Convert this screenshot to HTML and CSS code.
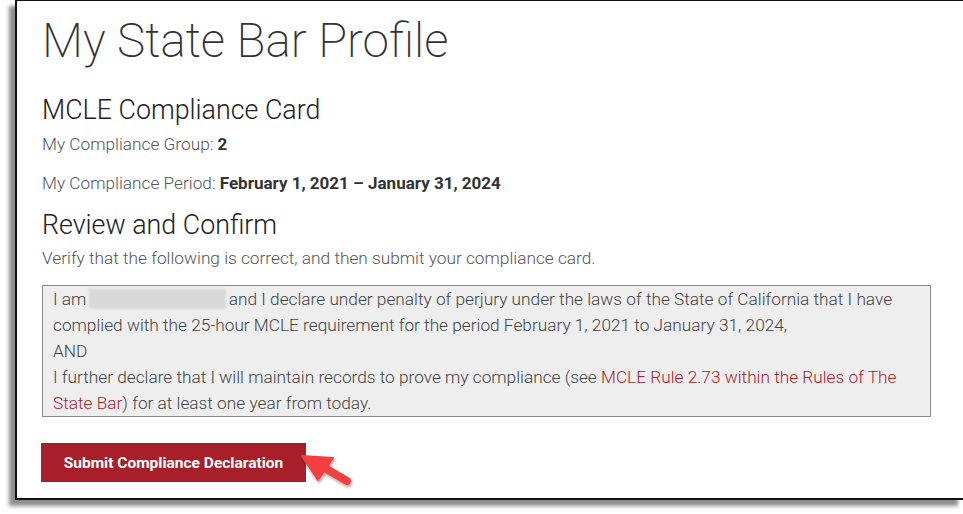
FILE: index.html
```html
<!DOCTYPE html>
<html lang="en">
<head>
<meta charset="utf-8">
<title>My State Bar Profile</title>
<link rel="stylesheet" href="styles.css">
</head>
<body>
<div class="frame">
  <main class="content">
    <h1 class="title">My State Bar Profile</h1>
    <h2 class="section-title first">MCLE Compliance Card</h2>
    <p class="info">My Compliance Group: <strong>2</strong></p>
    <p class="info period">My Compliance Period: <strong>February 1, 2021 – January 31, 2024</strong></p>
    <h2 class="section-title second">Review and Confirm</h2>
    <p class="info intro">Verify that the following is correct, and then submit your compliance card.</p>
    <div class="declaration">
      I am <span class="redacted"></span> and I declare under penalty of perjury under the laws of the State of California that I have complied with the 25-hour MCLE requirement for the period February 1, 2021 to January 31, 2024,<br>
      AND<br>
      I further declare that I will maintain records to prove my compliance (see <a href="#" class="link">MCLE Rule 2.73 within the Rules of The State Bar</a>) for at least one year from today.
    </div>
    <div class="actions">
      <button class="submit" type="button">Submit Compliance Declaration</button>
      <svg class="arrow" width="64" height="44" viewBox="0 0 64 44" aria-hidden="true">
        <defs>
          <filter id="sh" x="-30%" y="-30%" width="160%" height="160%">
            <feDropShadow dx="1" dy="2" stdDeviation="1.5" flood-color="#000" flood-opacity="0.35"/>
          </filter>
        </defs>
        <g filter="url(#sh)" fill="#f2403f" stroke="#f2403f">
          <line x1="28" y1="18" x2="52" y2="32" stroke-width="8" stroke-linecap="round"/>
          <polygon points="7,7 38,9 23,31" stroke-width="2" stroke-linejoin="round"/>
        </g>
      </svg>
    </div>
  </main>
</div>
</body>
</html>
```

FILE: styles.css
```css
html, body {
  margin: 0;
  padding: 0;
  background: #ffffff;
  overflow: hidden;
}

body {
  width: 963px;
  height: 514px;
  font-family: Roboto, "Liberation Sans", Arial, sans-serif;
}

.frame {
  margin-left: 15px;
  width: 946px;
  height: 497px;
  border: 1px solid #111;
  border-left-width: 2px;
  border-bottom-width: 2px;
  background: #fff;
  box-shadow: -6px 6px 4px rgba(0, 0, 0, 0.45);
  box-sizing: content-box;
}

.content {
  padding: 12px 0 0 25px;
}

.title {
  margin: 0;
  font-size: 47.6px;
  line-height: 56px;
  font-weight: 200;
  color: #333;
  letter-spacing: 0;
}

.section-title {
  margin: 0;
  font-size: 26.8px;
  line-height: 34px;
  font-weight: 300;
  color: #222;
}

.section-title.first {
  margin-top: 24px;
}

.section-title.second {
  margin-top: 12px;
}

.info {
  margin: 4px 0 0;
  font-size: 17.25px;
  line-height: 26px;
  font-weight: 300;
  color: #555;
}

.info strong {
  font-weight: 700;
  font-size: 17px;
  color: #333;
}

.info.period {
  margin-top: 13px;
}

.info.intro {
  margin-top: 3px;
}

.declaration {
  margin-top: 14px;
  width: 867px;
  padding: 0 10px;
  border: 1px solid #8a8a8a;
  background: #eeeeee;
  font-size: 17.25px;
  line-height: 26px;
  font-weight: 300;
  color: #444;
}

.redacted {
  display: inline-block;
  width: 137px;
  height: 20px;
  vertical-align: -4px;
  margin: 0 -1px 0 -2px;
  background: #d9d9d9;
  filter: blur(1px);
}

.link {
  color: #a8232e;
  text-decoration: none;
}

.actions {
  position: relative;
  margin-top: 26px;
}

.submit {
  display: block;
  width: 265px;
  height: 39px;
  margin-left: -1px;
  border: none;
  background: #a81f2a;
  color: #fff;
  font-family: Roboto, "Liberation Sans", Arial, sans-serif;
  font-size: 15.5px;
  font-weight: 700;
  cursor: pointer;
}

.arrow {
  position: absolute;
  left: 253px;
  top: 6px;
}
```
